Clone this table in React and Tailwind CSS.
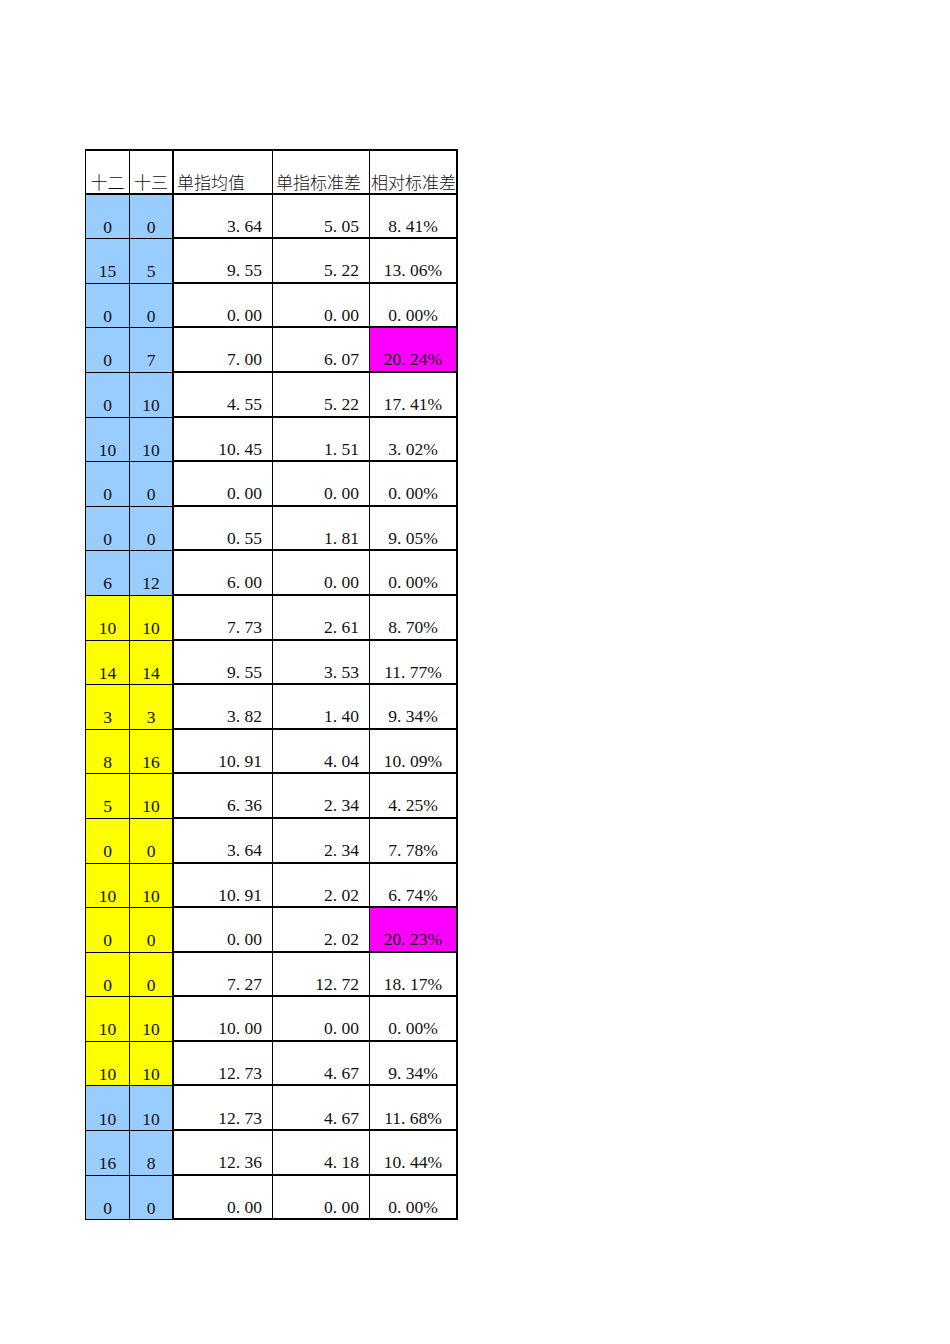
const ROWS = [
  ['0', '0', '3.64', '5.05', '8.41%', 'b', false],
  ['15', '5', '9.55', '5.22', '13.06%', 'b', false],
  ['0', '0', '0.00', '0.00', '0.00%', 'b', false],
  ['0', '7', '7.00', '6.07', '20.24%', 'b', true],
  ['0', '10', '4.55', '5.22', '17.41%', 'b', false],
  ['10', '10', '10.45', '1.51', '3.02%', 'b', false],
  ['0', '0', '0.00', '0.00', '0.00%', 'b', false],
  ['0', '0', '0.55', '1.81', '9.05%', 'b', false],
  ['6', '12', '6.00', '0.00', '0.00%', 'b', false],
  ['10', '10', '7.73', '2.61', '8.70%', 'y', false],
  ['14', '14', '9.55', '3.53', '11.77%', 'y', false],
  ['3', '3', '3.82', '1.40', '9.34%', 'y', false],
  ['8', '16', '10.91', '4.04', '10.09%', 'y', false],
  ['5', '10', '6.36', '2.34', '4.25%', 'y', false],
  ['0', '0', '3.64', '2.34', '7.78%', 'y', false],
  ['10', '10', '10.91', '2.02', '6.74%', 'y', false],
  ['0', '0', '0.00', '2.02', '20.23%', 'y', true],
  ['0', '0', '7.27', '12.72', '18.17%', 'y', false],
  ['10', '10', '10.00', '0.00', '0.00%', 'y', false],
  ['10', '10', '12.73', '4.67', '9.34%', 'y', false],
  ['10', '10', '12.73', '4.67', '11.68%', 'b', false],
  ['16', '8', '12.36', '4.18', '10.44%', 'b', false],
  ['0', '0', '0.00', '0.00', '0.00%', 'b', false],
];

// SimSun-style: the period takes a half-width slot
function Num({ v }) {
  const [a, b] = v.split('.');
  if (b === undefined) return <span>{v}</span>;
  return (
    <span>
      {a}
      <span className="inline-block w-[0.5em] text-left">.</span>
      {b}
    </span>
  );
}

const cell = 'box-border flex items-end leading-none border-black';
const head = 'text-[17px] font-light pb-[3px]';
const data = 'text-[17.5px] pb-[2px]';
const cjk = { fontFamily: '"Noto Sans CJK SC", sans-serif' };

export default function App() {
  return (
    <div className="min-h-[1344px] w-[950px] bg-white pt-[149px] pl-[85px] text-[#111]" style={{ fontFamily: '"Liberation Serif", "Noto Sans CJK SC", serif' }}>
      <div className="flex flex-col w-[373px]">
        {/* header */}
        <div className="flex h-[45.6px]">
          <div className={`${cell} ${head} w-[45px] border-t-2 border-b-2 border-l border-r justify-center`} style={cjk}>十二</div>
          <div className={`${cell} ${head} w-[44px] border-t-2 border-b-2 border-r-2 justify-center`} style={cjk}>十三</div>
          <div className={`${cell} ${head} w-[99px] border-t-2 border-b-2 border-r pl-[3px]`} style={cjk}>单指均值</div>
          <div className={`${cell} ${head} w-[97px] border-t-2 border-b-2 border-r pl-[3px]`} style={cjk}>单指标准差</div>
          <div className={`${cell} ${head} w-[88px] border-t-2 border-b-2 border-r-2 pl-[1px] overflow-hidden whitespace-nowrap`} style={cjk}>相对标准差</div>
        </div>
        {ROWS.map((r, i) => {
          const bg = r[5] === 'b' ? 'bg-[#99ccff]' : 'bg-[#ffff00]';
          return (
            <div key={i} className="flex h-[44.6px]">
              <div className={`${cell} ${data} ${bg} w-[45px] border-l border-r border-b justify-center`}>{r[0]}</div>
              <div className={`${cell} ${data} ${bg} w-[44px] border-r-2 border-b justify-center`}>{r[1]}</div>
              <div className={`${cell} ${data} w-[99px] border-r border-b-2 justify-end pr-[10px]`}><Num v={r[2]} /></div>
              <div className={`${cell} ${data} w-[97px] border-r border-b-2 justify-end pr-[10px]`}><Num v={r[3]} /></div>
              <div className={`${cell} ${data} w-[88px] border-r-2 border-b-2 justify-center ${r[6] ? 'bg-[#ff00ff]' : ''}`}><Num v={r[4]} /></div>
            </div>
          );
        })}
      </div>
    </div>
  );
}
